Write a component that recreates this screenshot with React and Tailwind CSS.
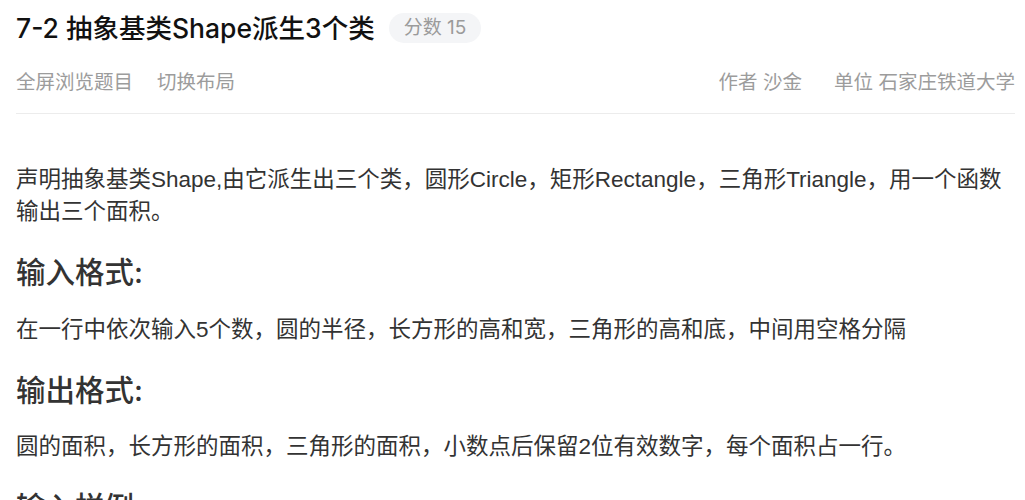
import React from "react";

export default function App() {
  return (
    <div className="bg-white w-[1025px] h-[500px] overflow-hidden pl-4 pr-[10px] font-['Inter','Noto_Sans_CJK_SC',sans-serif]">
      <div className="flex items-center gap-[14px] pt-[10px] h-[46px]">
        <h1 className="text-[26.5px] font-medium text-[#111] leading-[36px]">7-2 抽象基类Shape派生3个类</h1>
        <span className="bg-[#f4f5f7] text-[#9b9b9b] text-[19px] leading-[30px] px-[15px] rounded-full">分数 15</span>
      </div>
      <div className="flex items-center justify-between h-[30px] mt-[22px] text-[19.5px] text-[#9c9c9c]">
        <div className="flex gap-6">
          <span>全屏浏览题目</span>
          <span>切换布局</span>
        </div>
        <div className="flex gap-8">
          <span>作者 沙金</span>
          <span>单位 石家庄铁道大学</span>
        </div>
      </div>
      <div className="border-b border-[#ececec] mt-[15px]" />
      <div className="text-[#333] mt-[50px]">
        <p className="text-[22.5px] leading-[32px] font-['Liberation_Sans','Noto_Sans_CJK_SC',sans-serif]">声明抽象基类Shape,由它派生出三个类，圆形Circle，矩形Rectangle，三角形Triangle，用一个函数输出三个面积。</p>
        <h3 className="text-[29.5px] font-medium leading-[40px] mt-[24px]">输入格式:</h3>
        <p className="text-[22.5px] leading-[32px] mt-[22px] font-['Liberation_Sans','Noto_Sans_CJK_SC',sans-serif]">在一行中依次输入5个数，圆的半径，长方形的高和宽，三角形的高和底，中间用空格分隔</p>
        <h3 className="text-[29.5px] font-medium leading-[40px] mt-[24px]">输出格式:</h3>
        <p className="text-[22.5px] leading-[32px] mt-[21px] font-['Liberation_Sans','Noto_Sans_CJK_SC',sans-serif]">圆的面积，长方形的面积，三角形的面积，小数点后保留2位有效数字，每个面积占一行。</p>
        <h3 className="text-[29.5px] font-medium leading-[40px] mt-[24px]">输入样例:</h3>
      </div>
    </div>
  );
}
